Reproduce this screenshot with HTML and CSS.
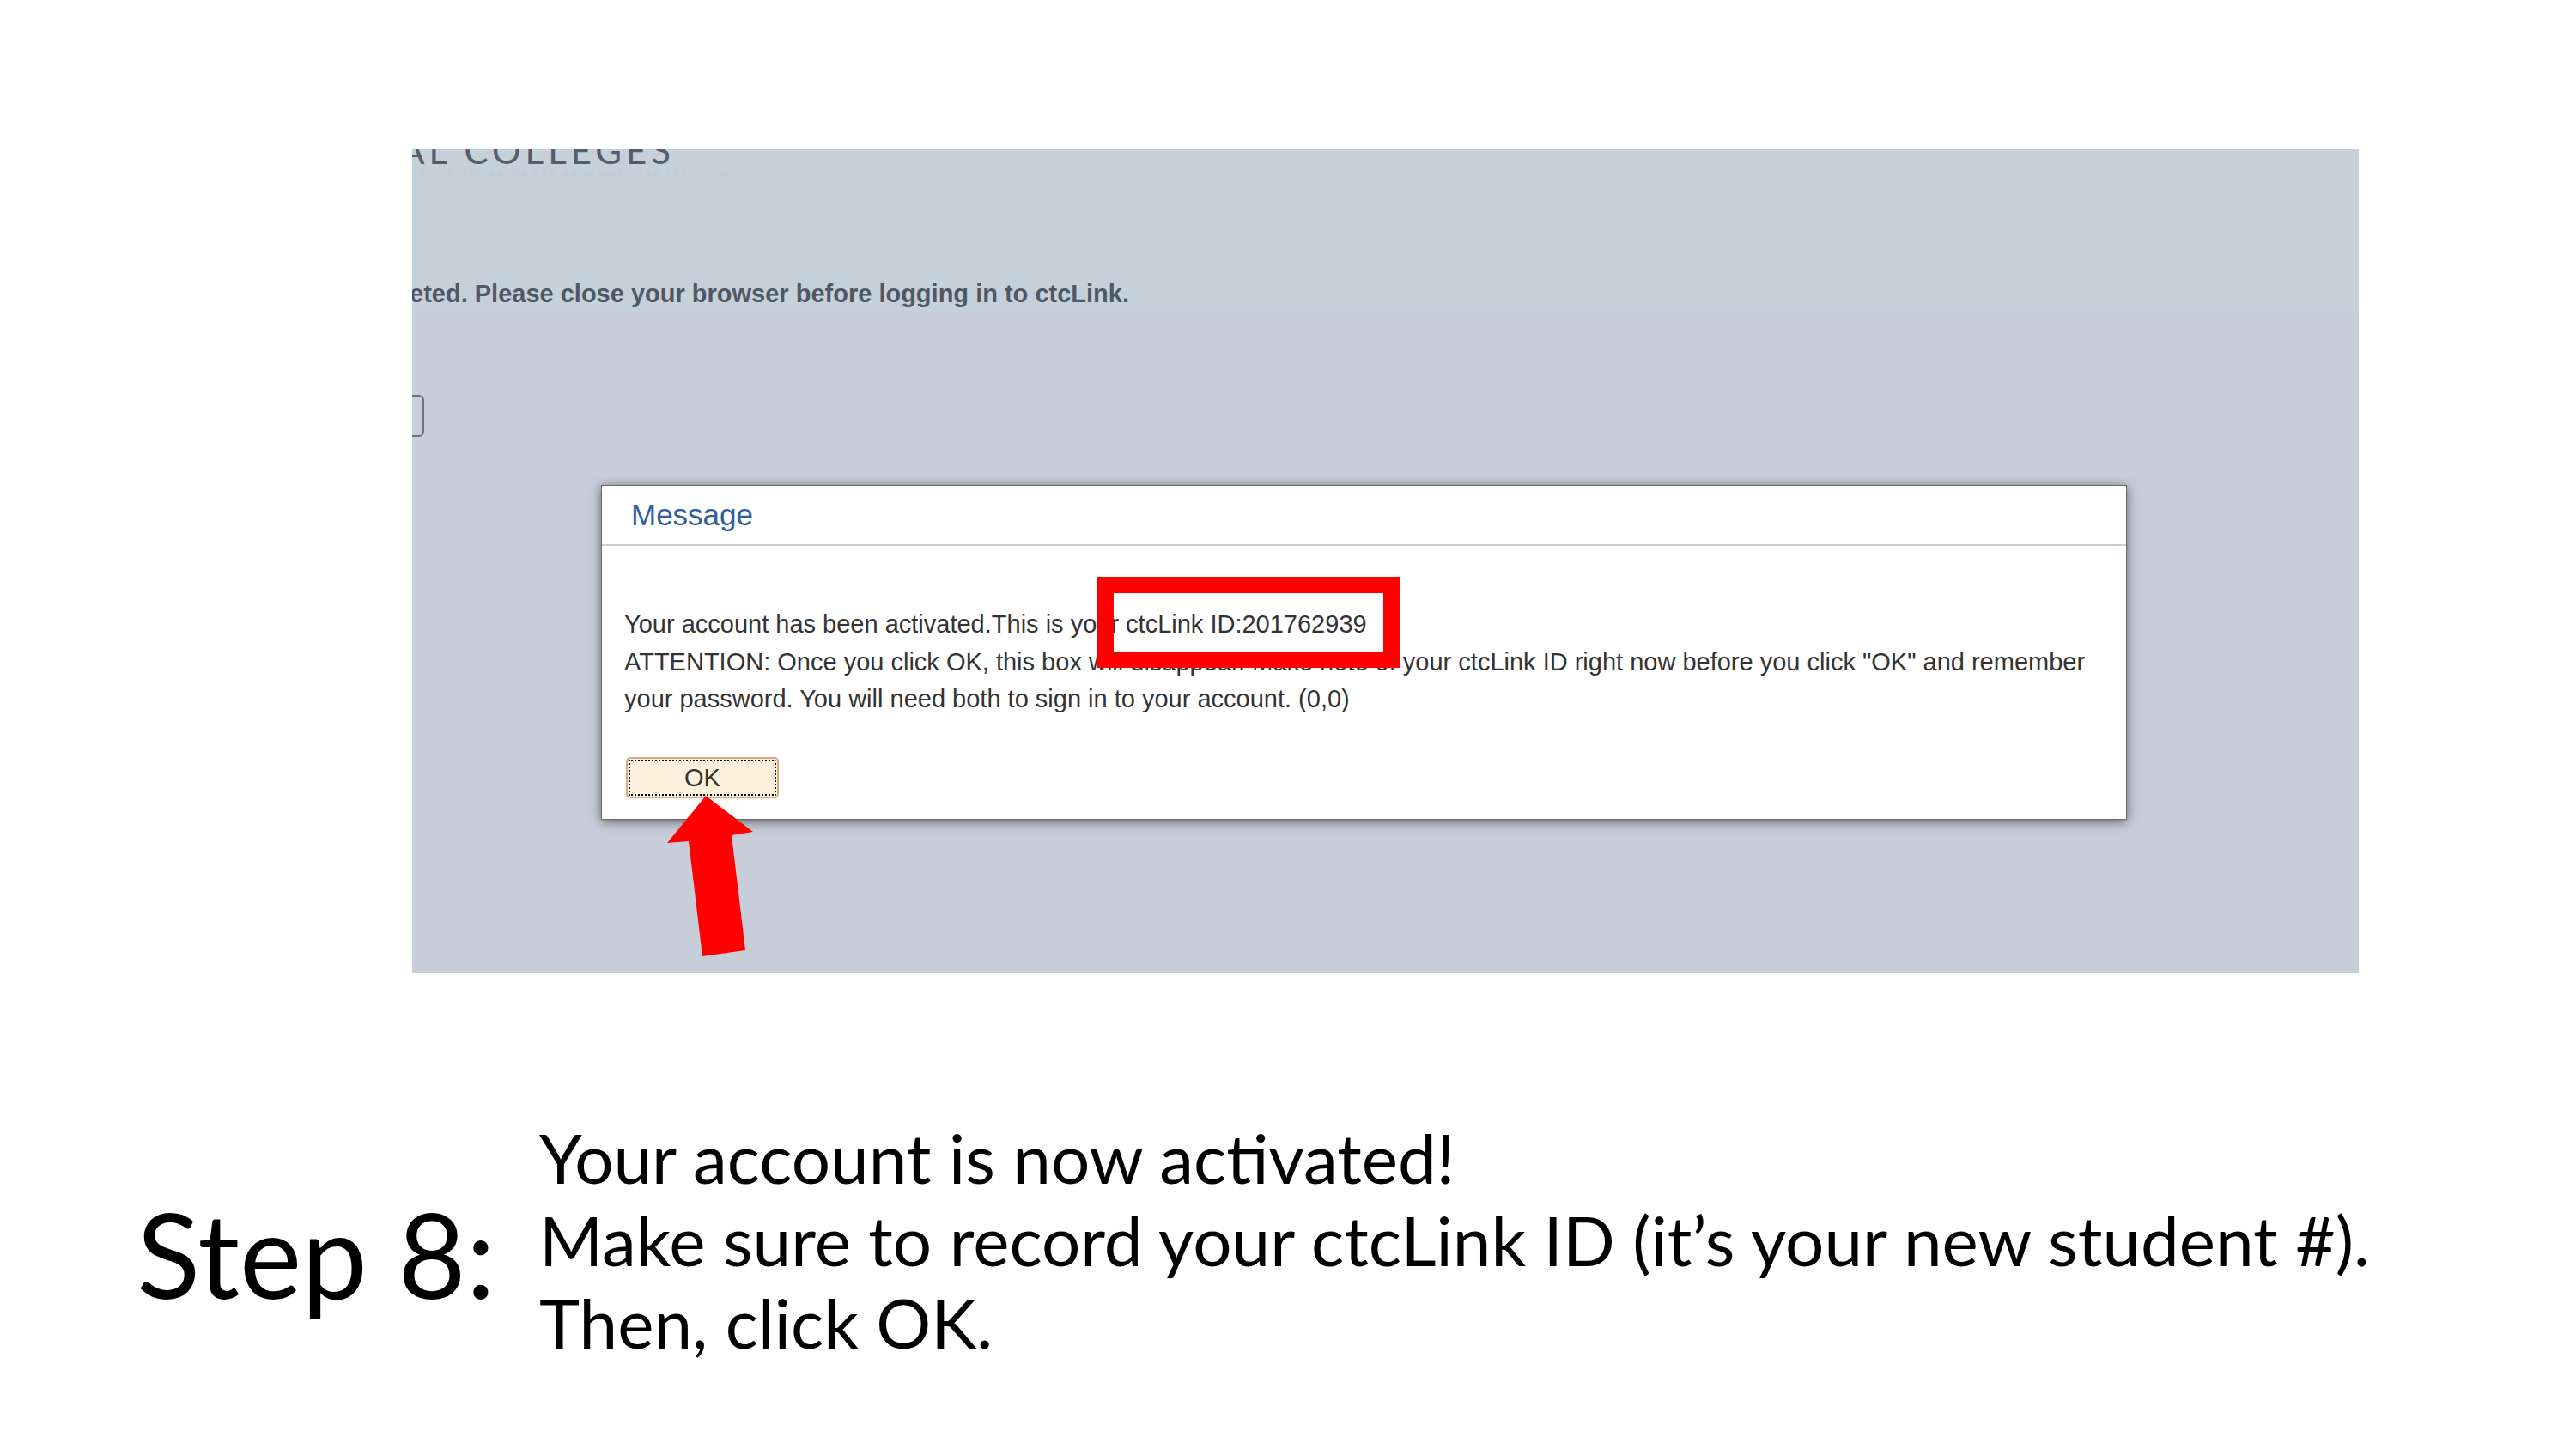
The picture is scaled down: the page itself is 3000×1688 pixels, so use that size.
FILE: index.html
```html
<!DOCTYPE html>
<html lang="en">
<head>
  <meta charset="UTF-8">
  <title>Step 8</title>
  <link rel="stylesheet" href="styles.css">
</head>
<body>
  <div class="slide">
    <div class="shot">
      <div class="shot-top">
        <div class="logo">AL COLLEGES</div>
        <div class="logo-sub">RD &nbsp;&nbsp; STATE BOARD FOR COMMUNITY AND TECHNICAL</div>
        <div class="notice">eted. Please close your browser before logging in to ctcLink.</div>
      </div>
      <div class="shot-main">
        <div class="field"></div>
        <div class="dialog">
          <div class="dialog-head">Message</div>
          <div class="dialog-body">
            <p class="msg">Your account has been activated.This is your ctcLink ID:201762939<br>ATTENTION: Once you click OK, this box will disappear. Make note of your ctcLink ID right now before you click "OK" and remember<br>your password. You will need both to sign in to your account. (0,0)</p>
            <button class="ok-btn">OK</button>
          </div>
        </div>
      </div>
      <!-- annotations drawn over the screenshot -->
      <div class="id-mark"></div>
      <svg class="arrow" width="100" height="188" viewBox="0 0 100 188">
        <polygon points="45,0 100,42 75,46 91,180 41,187 25,53 0,55" fill="#ff0000"/>
      </svg>
    </div>

    <div class="caption">
      <div class="step">Step 8:</div>
      <div class="lines">
        <div>Your account is now activated!</div>
        <div>Make sure to record your ctcLink ID (it’s your new student #).</div>
        <div>Then, click OK.</div>
      </div>
    </div>
  </div>
</body>
</html>
```

FILE: styles.css
```css
body {
  margin: 0;
  background: #ffffff;
  font-family: "Liberation Sans", Arial, sans-serif;
}

.slide {
  width: 3000px;
  height: 1688px;
  overflow: hidden;
}

.shot {
  position: relative;
  width: 2267px;
  height: 960px;
  margin: 174px 0 0 480px;
  overflow: hidden;
}

.shot-top {
  height: 189px;
  background: #c6d0d9;
  overflow: hidden;
}

.logo {
  margin: -20px 0 0 -14px;
  font-family: Lato, "Open Sans", sans-serif;
  font-weight: 400;
  font-size: 42px;
  line-height: 42px;
  letter-spacing: 5px;
  color: #555e68;
  white-space: nowrap;
}

.logo-sub {
  font-size: 9px;
  line-height: 12px;
  letter-spacing: 3px;
  color: rgba(93, 102, 112, 0.08);
  white-space: nowrap;
}

.notice {
  margin: 118px 0 0 -3px;
  font-size: 29px;
  font-weight: bold;
  line-height: 32px;
  color: #4f5864;
  white-space: nowrap;
}

.shot-main {
  height: 771px;
  padding-top: 97px;
  box-sizing: border-box;
  background: #c7cdd9;
}

.field {
  width: 14px;
  height: 49px;
  box-sizing: border-box;
  border: 2px solid #6d7278;
  border-left: 0;
  border-radius: 0 6px 6px 0;
}

.dialog {
  width: 1777px;
  height: 390px;
  margin: 56px 0 0 220px;
  box-sizing: border-box;
  background: #ffffff;
  border: 1px solid #6a6a6a;
  box-shadow: 0 2px 12px rgba(0, 0, 0, 0.55);
}

.dialog-head {
  padding: 14px 34px;
  font-size: 35px;
  line-height: 40px;
  color: #30609c;
  border-bottom: 2px solid #c9ced6;
}

.dialog-body {
  padding: 70px 26px 0;
}

.msg {
  margin: 0;
  font-size: 29px;
  line-height: 43.5px;
  color: #333333;
  white-space: nowrap;
}

.ok-btn {
  display: block;
  width: 178px;
  height: 48px;
  margin: 45.5px 0 0 2px;
  padding: 0;
  box-sizing: border-box;
  font-family: "Liberation Sans", Arial, sans-serif;
  font-size: 29px;
  color: #333333;
  background: #fdf0dc;
  border: 2px solid #dba77c;
  border-radius: 5px;
  outline: 2px dotted #000000;
  outline-offset: -5px;
}

.id-mark {
  position: absolute;
  left: 798px;
  top: 498px;
  width: 352px;
  height: 106px;
  box-sizing: border-box;
  border: 19px solid #ff0000;
}

.arrow {
  position: absolute;
  left: 297px;
  top: 753px;
}

.caption {
  display: flex;
  align-items: flex-start;
  margin-top: 166px;
  padding-left: 159px;
  font-family: Lato, "Open Sans", sans-serif;
  color: #000000;
}

.step {
  width: 469px;
  flex-shrink: 0;
  margin-top: 79px;
  font-size: 137px;
  line-height: 162px;
  white-space: nowrap;
}

.lines {
  font-size: 80px;
  line-height: 96px;
  white-space: nowrap;
}
```
